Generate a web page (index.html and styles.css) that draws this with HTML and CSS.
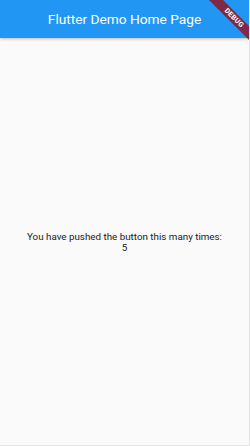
FILE: index.html
```html
<!DOCTYPE html>
<html>
<head>
<meta charset="utf-8">
<link rel="stylesheet" href="styles.css">
</head>
<body>
<div class="app">
  <header class="appbar">
    <h1 class="title">Flutter Demo Home Page</h1>
  </header>
  <main class="content">
    <p class="label">You have pushed the button this many times:</p>
    <p class="count">5</p>
  </main>
  <div class="banner">DEBUG</div>
</div>
</body>
</html>
```

FILE: styles.css
```css
html, body {
  margin: 0;
  padding: 0;
}
body {
  width: 250px;
  height: 446px;
  font-family: Roboto, "Noto Sans", sans-serif;
  background: #fafafa;
}
.app {
  position: relative;
  width: 249px;
  height: 445px;
  overflow: hidden;
  display: flex;
  flex-direction: column;
  background: #fafafa;
  border-right: 1px solid #e4e4e4;
  border-bottom: 1px solid #e4e4e4;
}
.appbar {
  height: 38px;
  flex: none;
  background: #2196f3;
  display: flex;
  align-items: center;
  justify-content: center;
  box-shadow: 0 1px 3px rgba(0,0,0,0.25);
  position: relative;
  z-index: 1;
}
.title {
  margin: 0;
  font-size: 13.7px;
  font-weight: 400;
  color: #ffffff;
}
.content {
  flex: 1;
  display: flex;
  flex-direction: column;
  align-items: center;
  justify-content: center;
  color: #212121;
}
.label, .count {
  margin: 0;
  font-size: 9.8px;
  line-height: 11px;
}
.banner {
  position: absolute;
  left: 199px;
  top: 13px;
  width: 70px;
  height: 10px;
  line-height: 10px;
  transform: rotate(45deg);
  background: #7e2a47;
  color: #fff;
  font-size: 7px;
  font-weight: 700;
  text-align: center;
  letter-spacing: 0.3px;
  z-index: 2;
}
```
